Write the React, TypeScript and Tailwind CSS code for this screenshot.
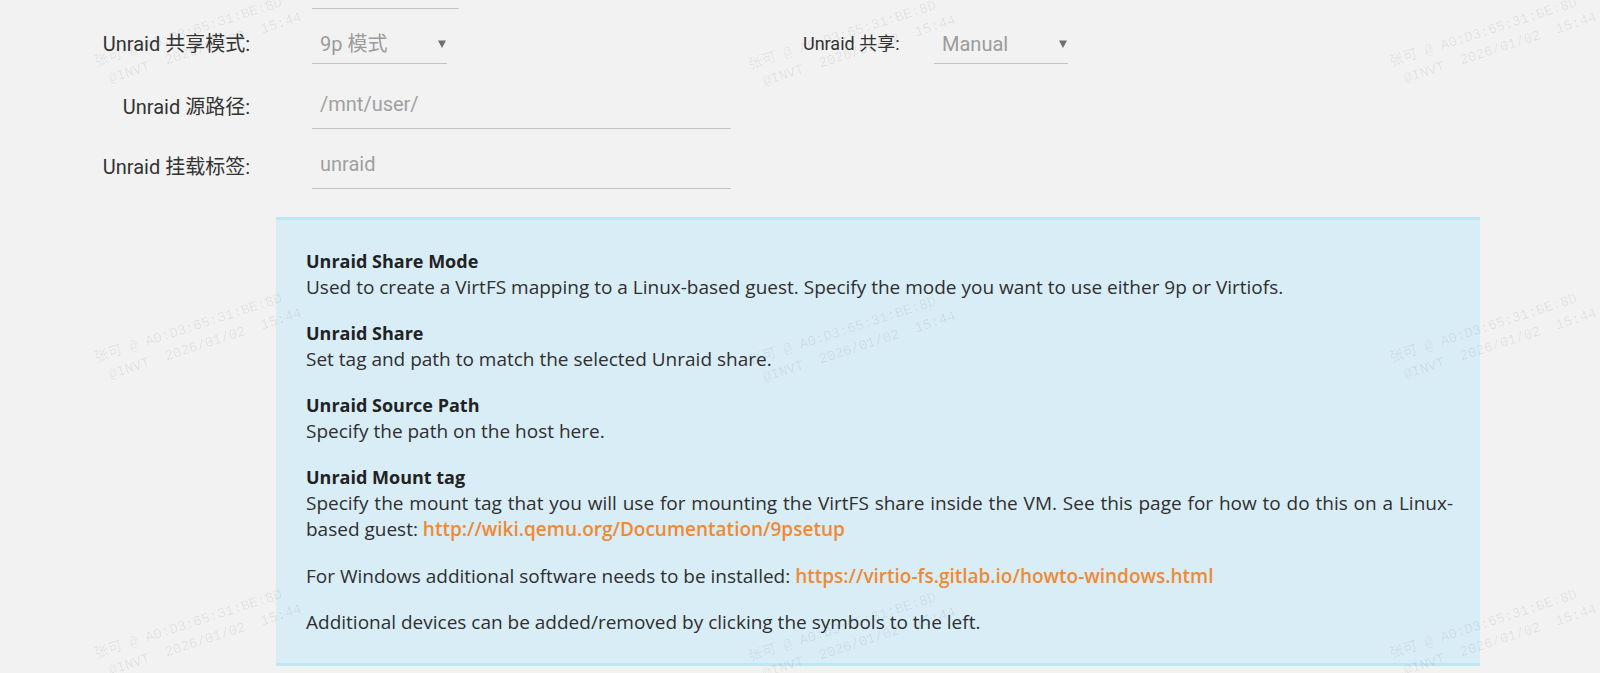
const labelFont = "font-['Roboto','Noto_Sans_CJK_SC',sans-serif]";

function Arrow() {
  return (
    <svg width="8" height="8" viewBox="0 0 8 8" className="shrink-0">
      <path d="M0 0.5h8L4 8z" fill="#6f6f6f" />
    </svg>
  );
}

function SelectBox({ value, className }: { value: string; className: string }) {
  return (
    <div
      className={`flex items-center justify-between border-b border-[#c4c4c4] pb-[7px] pl-2 pr-[1px] pt-2 ${className}`}
    >
      <span className="text-[20px] leading-6 text-[#9b9b9b]">{value}</span>
      <Arrow />
    </div>
  );
}

function TextInput({ value }: { value: string }) {
  return (
    <div className="w-[419px] border-b border-[#c4c4c4] pb-3 pl-2 pt-2 text-[20px] leading-6 text-[#a0a0a0]">
      {value}
    </div>
  );
}

function Label({ children }: { children: string }) {
  return (
    <div className="w-[250px] shrink-0 text-right text-[20px] leading-6 text-[#333]">
      {children}
    </div>
  );
}

function HelpTitle({ children, first }: { children: string; first?: boolean }) {
  return (
    <h3 className={`${first ? "" : "mt-5"} text-[18px] font-bold text-[#222]`}>{children}</h3>
  );
}

const marks = [
  "left-[92px] top-[53px]",
  "left-[746px] top-[56px]",
  "left-[1387px] top-[53px]",
  "left-[92px] top-[349px]",
  "left-[746px] top-[352px]",
  "left-[1387px] top-[349px]",
  "left-[92px] top-[645px]",
  "left-[746px] top-[648px]",
  "left-[1387px] top-[645px]",
];

function Watermark({ pos }: { pos: string }) {
  return (
    <div
      className={`pointer-events-none absolute ${pos} origin-top-left -rotate-[18deg] whitespace-pre font-['Liberation_Mono','Noto_Sans_CJK_SC',monospace] text-[14px] leading-5 text-black/[0.08]`}
    >
      <div>张可 @ A0:D3:65:31:BE:8D</div>
      <div> @INVT  2026/01/02  15:44</div>
    </div>
  );
}

export default function App() {
  return (
    <div className={`relative h-[673px] overflow-hidden bg-[#f2f2f2] ${labelFont}`}>
      <div className="ml-[312px] h-[9px] w-[147px] border-b border-[#c4c4c4]" />

      <div className="mt-[15px] flex items-center">
        <Label>Unraid 共享模式:</Label>
        <SelectBox value="9p 模式" className="ml-[62px] w-[135px]" />
        <div className="ml-[356px] w-[131px] text-[18px] leading-6 text-[#333]">
          Unraid 共享:
        </div>
        <SelectBox value="Manual" className="w-[134px]" />
      </div>

      <div className="mt-5 flex items-center">
        <Label>Unraid 源路径:</Label>
        <div className="ml-[62px]">
          <TextInput value="/mnt/user/" />
        </div>
      </div>

      <div className="mt-[15px] flex items-center">
        <Label>Unraid 挂载标签:</Label>
        <div className="ml-[62px]">
          <TextInput value="unraid" />
        </div>
      </div>

      <section className="ml-[276px] mt-[28px] w-[1204px] border-y-[3px] border-[#bce8f1] bg-[#d9edf7] pb-[28px] pl-[30px] pr-[27px] pt-[28px] text-justify font-['Open_Sans',sans-serif] text-[19px] leading-[26px] text-[#2f2f2f]">
        <HelpTitle first>Unraid Share Mode</HelpTitle>
        <p>
          Used to create a VirtFS mapping to a Linux-based guest. Specify the mode you want to use
          either 9p or Virtiofs.
        </p>

        <HelpTitle>Unraid Share</HelpTitle>
        <p>Set tag and path to match the selected Unraid share.</p>

        <HelpTitle>Unraid Source Path</HelpTitle>
        <p>Specify the path on the host here.</p>

        <HelpTitle>Unraid Mount tag</HelpTitle>
        <p>
          Specify the mount tag that you will use for mounting the VirtFS share inside the VM. See
          this page for how to do this on a Linux-based guest:{" "}
          <a className="font-semibold text-[#ef8a34]">http://wiki.qemu.org/Documentation/9psetup</a>
        </p>

        <p className="mt-[21px]">
          For Windows additional software needs to be installed:{" "}
          <a className="font-semibold text-[#ef8a34]">
            https://virtio-fs.gitlab.io/howto-windows.html
          </a>
        </p>

        <p className="mt-5">
          Additional devices can be added/removed by clicking the symbols to the left.
        </p>
      </section>

      {marks.map((m) => (
        <Watermark key={m} pos={m} />
      ))}
    </div>
  );
}
